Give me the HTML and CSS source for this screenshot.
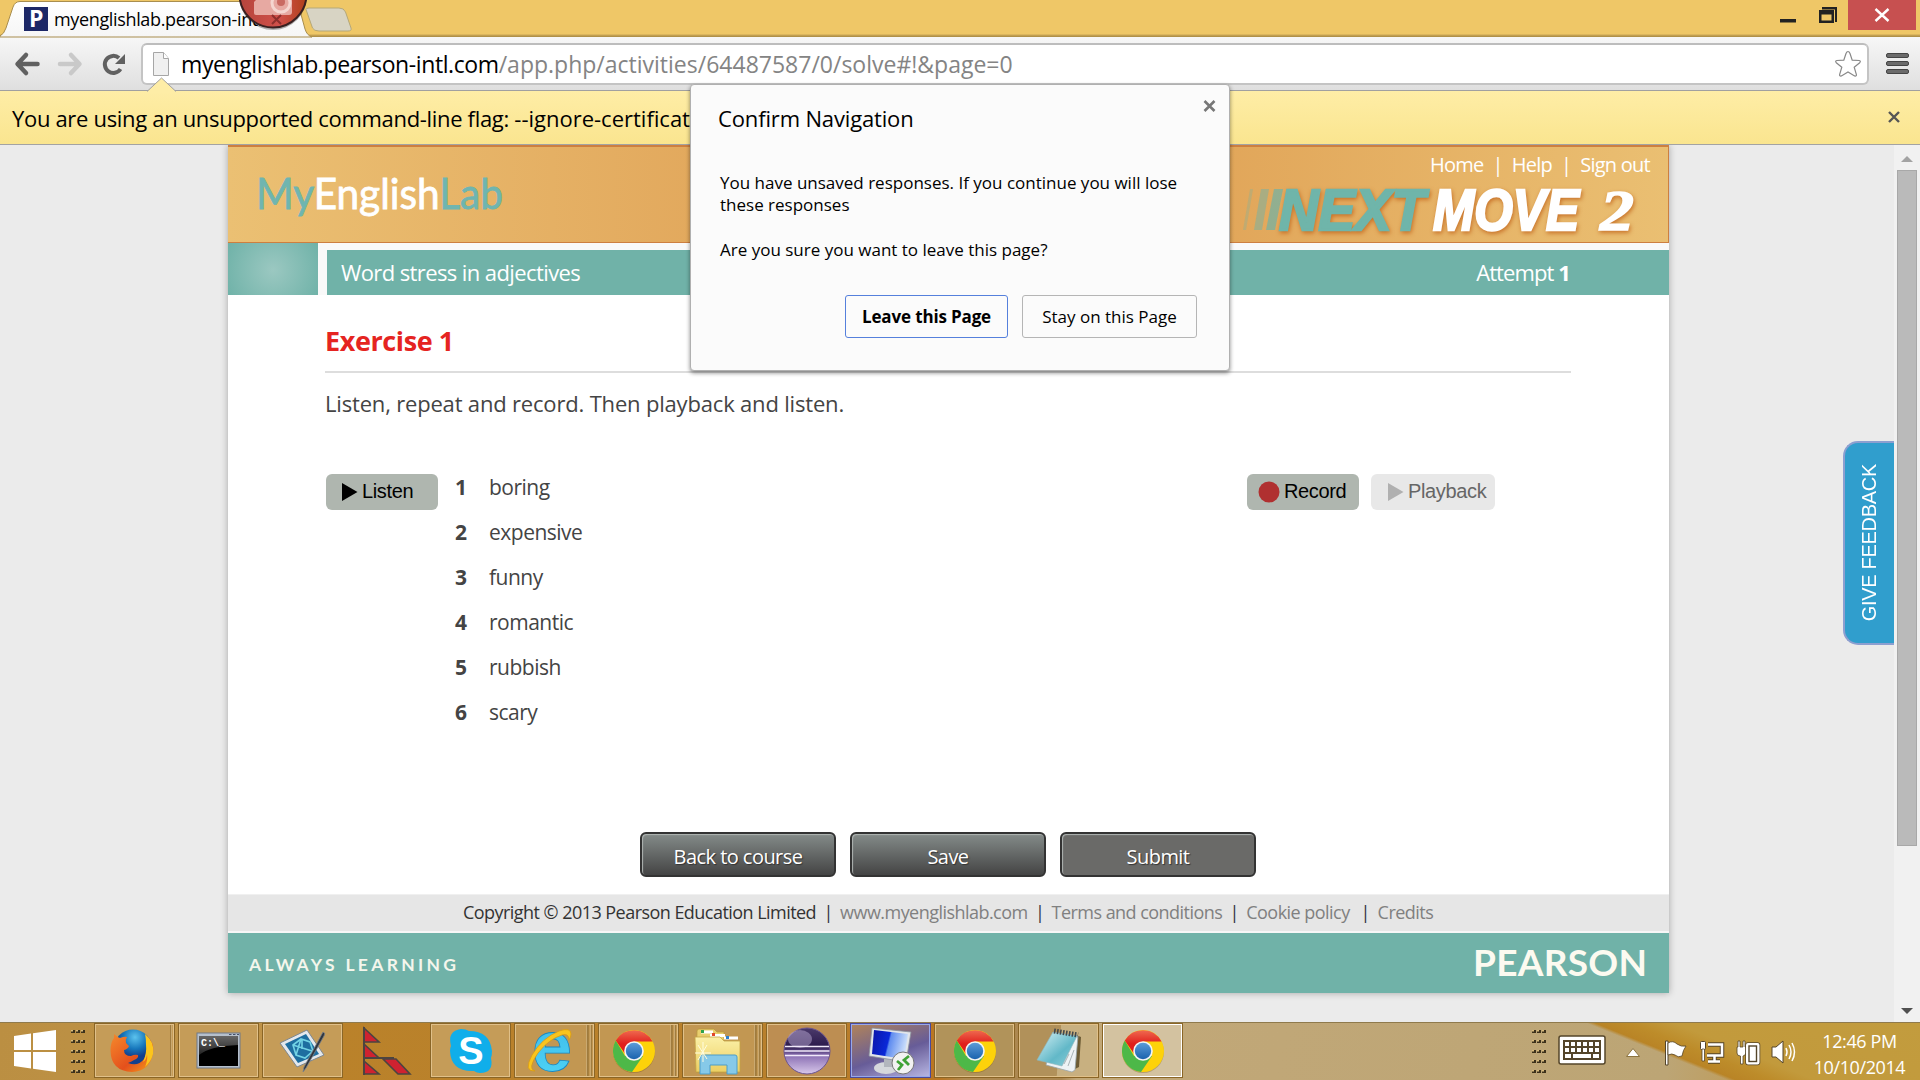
FILE: index.html
```html
<!DOCTYPE html>
<html lang="en">
<head>
<meta charset="utf-8">
<title>MyEnglishLab</title>
<link rel="stylesheet" href="styles.css">
</head>
<body>
<svg class="defs" width="0" height="0">
  <defs>
    <linearGradient id="g-red" x2="0" y2="1"><stop offset="0" stop-color="#ef6a50"/><stop offset=".6" stop-color="#e01f1c"/></linearGradient>
    <linearGradient id="g-blue" x2="0" y2="1"><stop offset="0" stop-color="#5b9bd8"/><stop offset="1" stop-color="#1a63ae"/></linearGradient>
    <linearGradient id="g-fox" x2="1" y2="1"><stop offset="0" stop-color="#f58a2c"/><stop offset=".6" stop-color="#e4501c"/><stop offset="1" stop-color="#f7a21b"/></linearGradient>
    <radialGradient id="g-globe" cx=".55" cy=".2"><stop offset="0" stop-color="#5cc3ee"/><stop offset=".6" stop-color="#1676bb"/><stop offset="1" stop-color="#14408c"/></radialGradient>
    <linearGradient id="g-ie" x2="0" y2="1"><stop offset="0" stop-color="#3cb6e6"/><stop offset="1" stop-color="#4fd6f8"/></linearGradient>
    <linearGradient id="g-folder" x2="0" y2="1"><stop offset="0" stop-color="#fbf0a8"/><stop offset="1" stop-color="#eccf62"/></linearGradient>
    <linearGradient id="g-ecl" x2="0" y2="1"><stop offset="0" stop-color="#4b3a6b"/><stop offset=".4" stop-color="#2b1a4c"/><stop offset=".6" stop-color="#8b70b4"/><stop offset="1" stop-color="#d8c8ea"/></linearGradient>
    <linearGradient id="g-screen" x2="1" y2=".2"><stop offset="0" stop-color="#0b14a8"/><stop offset=".5" stop-color="#0a28d8"/><stop offset=".55" stop-color="#5f8cf0"/><stop offset="1" stop-color="#c8dcfa"/></linearGradient>
    <linearGradient id="g-note" x2="1" y2="1"><stop offset="0" stop-color="#d8f2f6"/><stop offset=".6" stop-color="#62b8c8"/><stop offset="1" stop-color="#8fd0da"/></linearGradient>
    <linearGradient id="g-cmd" x2="0" y2="1"><stop offset="0" stop-color="#666"/><stop offset="1" stop-color="#222"/></linearGradient>
    <linearGradient id="g-rec" x2="1" y2="0"><stop offset="0" stop-color="#b5443c"/><stop offset=".6" stop-color="#d0504a"/><stop offset="1" stop-color="#b0401a"/></linearGradient>
    <linearGradient id="g-tab" x2="0" y2="1"><stop offset="0" stop-color="#fff"/><stop offset="1" stop-color="#f6f6f6"/></linearGradient>
    <symbol id="chrome" viewBox="0 0 44 44">
      <circle cx="22" cy="23" r="21" fill="#7a5a20" opacity=".35"/>
      <circle cx="22" cy="22" r="21" fill="#fdd20a"/>
      <path d="M3.8 11.5A21 21 0 0 0 20 42.900L31 27 13 27Z" fill="#4db848"/>
      <path d="M3.800 11.500A21 21 0 0 1 40.500 12.500L22 12.500 12.500 24Z" fill="url(#g-red)"/>
      <circle cx="22" cy="22" r="9.800" fill="#f4f4f4"/>
      <circle cx="22" cy="22" r="8.200" fill="url(#g-blue)"/>
    </symbol>
    <symbol id="grip" viewBox="0 0 14 45">
      <g fill="#3c311b"><path id="gr" d="M0 1h4v3H0zM5 1h4v3H5zM10 1h4v3h-4z"/><use href="#gr" y="10"/><use href="#gr" y="20"/><use href="#gr" y="30"/><use href="#gr" y="40"/></g>
      <g fill="#d9bb7c"><path id="gl" d="M0 1h2v1.500H0zM5 1h2v1.500H5zM10 1h2v1.500h-2z"/><use href="#gl" y="10"/><use href="#gl" y="20"/><use href="#gl" y="30"/><use href="#gl" y="40"/></g>
    </symbol>
  </defs>
</svg>

<div class="screen">
  <header class="titlebar">
    <svg class="tabs" width="360" height="37" viewBox="0 0 360 37">
      <path d="M306 9.500Q306 8 309 8H339Q344 8 345.500 12L351 28Q352 31 348 31H319Q314 31 312.500 28Z" fill="#d8d4c4" stroke="#b5a878"/>
      <path d="M0 37V36Q4 34 6 28L13 7Q15 1.500 20 1.500H292Q297 1.500 299 7L305 29Q307 35.500 312 37Z" fill="url(#g-tab)" stroke="#a88d4e"/>
      <rect x="24" y="7" width="24" height="24" fill="#1c2766"/>
      <text x="29" y="27" class="favicon">P</text>
    </svg>
    <span class="tab-title">myenglishlab.pearson-intl</span>
    <svg class="recorder" width="70" height="32" viewBox="0 0 70 32">
      <circle cx="35" cy="-4" r="34" fill="#000" opacity=".3"/>
      <circle cx="35" cy="-6" r="33.500" fill="url(#g-rec)" stroke="#3a2020" stroke-width="2"/>
      <path d="M18 0h36v12q0 3-3 3H18q-2 0-2-2V2z" fill="#e7a9a2"/>
      <circle cx="43" cy="3" r="9" fill="none" stroke="#f5d6d0" stroke-width="3"/><circle cx="43" cy="2" r="4" fill="#c96a62"/>
      <path d="M34 15l9 9M43 15l-9 9" stroke="#8c2f2c" stroke-width="2"/>
    </svg>
    <div class="winbtns">
      <svg width="62" height="30" viewBox="0 0 62 30"><path d="M0 19h16v3.500H0z" fill="#222"/><path d="M42 7h15v15h-2V9.500H42z" fill="#222"/><path d="M39 10h15v13H39zM41.500 14.500v6h10v-6z" fill="#222" fill-rule="evenodd"/></svg>
      <div class="winclose"><svg width="16" height="14" viewBox="0 0 16 14"><path d="M1.500 1l13 12M14.500 1l-13 12" stroke="#fff" stroke-width="2.400"/></svg></div>
    </div>
  </header>

  <div class="toolbar">
    <svg class="nav" width="126" height="54" viewBox="0 0 126 54">
      <path d="M26 18L17.500 27l8.500 9M18 27h19.500" fill="none" stroke="#616161" stroke-width="4.500" stroke-linecap="round" stroke-linejoin="round"/>
      <path d="M71 18l8.500 9-8.500 9M79 27H60" fill="none" stroke="#c9c9c9" stroke-width="4.500" stroke-linecap="round" stroke-linejoin="round"/>
      <path d="M120.500 32A8.500 8.500 0 1 1 119 21" fill="none" stroke="#616161" stroke-width="4"/><path d="M125 17v10h-10z" fill="#616161"/>
    </svg>
    <div class="omnibox">
      <svg width="16" height="24" viewBox="0 0 16 24"><path d="M.5.5h10l5 6v17H.5z" fill="#f0f0f0" stroke="#a6a6a6"/><path d="M10.500.5v6h5" fill="#fff" stroke="#a6a6a6"/></svg>
      <span class="url"><span class="host">myenglishlab.pearson-intl.com</span><span class="path">/app.php/activities/64487587/0/solve#!&amp;page=0</span></span>
      <svg class="star" width="28" height="28" viewBox="0 0 28 28"><path d="M14 1.500q1.200 0 2 2l2.200 6.700 7 .3q2 .4.500 2.200l-5.500 4.500 2.200 7.300q.2 2-1.800 1.400L14 22l-6.600 3.900q-2 .6-1.800-1.400l2.200-7.300L2.300 12.700q-1.500-1.800.5-2.200l7-.3L12 3.500q.8-2 2-2z" fill="#fff" stroke="#888" stroke-width="1.200"/></svg>
    </div>
    <svg class="menu" width="24" height="22" viewBox="0 0 24 22"><g fill="#6b6b6b" stroke="#454545"><rect x=".5" y=".5" width="22" height="4" rx="1.500"/><rect x=".5" y="8.500" width="22" height="4" rx="1.500"/><rect x=".5" y="16.500" width="22" height="4" rx="1.500"/></g></svg>
  </div>

  <div class="infobar">
    <svg class="notch" width="30" height="15" viewBox="0 0 30 15"><path d="M0 14.500L14.500 1 29 14.500" fill="#feeda6" stroke="#a0a0a0"/><path d="M1 15h27" stroke="#feeda6" stroke-width="2"/></svg>
    <span class="info-text"><span class="warn">You are using an unsupported command-line flag: </span>--ignore-certificat</span>
    <svg class="x" width="12" height="12" viewBox="0 0 12 12"><path d="M1 1l10 10M11 1L1 11" stroke="#555" stroke-width="2.400"/></svg>
  </div>

  <div class="viewport">
    <main class="page">
      <div class="banner">
        <svg width="260" height="90" viewBox="0 0 260 90" class="logo"><text x="-4" y="62" textLength="247" lengthAdjust="spacingAndGlyphs"><tspan class="teal">My</tspan><tspan class="white">English</tspan><tspan class="teal">Lab</tspan></text></svg>
        <div class="banner-right">
          <nav class="toplinks"><span>Home</span><i>|</i><span>Help</span><i>|</i><span>Sign out</span></nav>
          <svg class="nextmove" width="400" height="56" viewBox="0 0 400 56">
            <g fill="#6fb2a7"><path d="M1 8h3L-3 49H-6z" opacity=".3"/><path d="M12 8h8L13 49H5z" opacity=".5"/><path d="M25 8h9L26 49H17z" opacity=".7"/></g>
            <text x="30" y="49" class="nm next" textLength="146" lengthAdjust="spacingAndGlyphs">NEXT</text>
            <text x="184" y="49" class="nm move" textLength="146" lengthAdjust="spacingAndGlyphs">MOVE</text>
            <text x="351" y="49" class="nm two" textLength="34" lengthAdjust="spacingAndGlyphs">2</text>
          </svg>
        </div>
      </div>
      <div class="titlerow">
        <div class="glow"></div>
        <div class="unit"><span>Word stress in adjectives</span><span class="attempt">Attempt <b>1</b></span></div>
      </div>
      <section class="content">
        <h1>Exercise 1</h1>
        <p class="rubric">Listen, repeat and record. Then playback and listen.</p>
        <div class="task">
          <div class="abtn listen"><svg width="16" height="18" viewBox="0 0 16 18"><path d="M0 0l15.500 9L0 18z"/></svg><span>Listen</span></div>
          <ol class="words">
            <li><b>1</b><span>boring</span></li>
            <li><b>2</b><span>expensive</span></li>
            <li><b>3</b><span>funny</span></li>
            <li><b>4</b><span>romantic</span></li>
            <li><b>5</b><span>rubbish</span></li>
            <li><b>6</b><span>scary</span></li>
          </ol>
          <div class="abtn record"><svg width="22" height="22" viewBox="0 0 22 22"><circle cx="11" cy="11" r="10.500" fill="#b03030"/></svg><span>Record</span></div>
          <div class="abtn playback"><svg width="16" height="18" viewBox="0 0 16 18"><path d="M0 0l15.500 9L0 18z" fill="#b0b0b0"/></svg><span>Playback</span></div>
        </div>
        <div class="actions">
          <div class="btn">Back to course</div>
          <div class="btn">Save</div>
          <div class="btn flat">Submit</div>
        </div>
      </section>
      <div class="legal"><span class="dark">Copyright © 2013 Pearson Education Limited</span><i>|</i><span>www.myenglishlab.com</span><i>|</i><span>Terms and conditions</span><i>|</i><span>Cookie policy</span><i class="wide">|</i><span>Credits</span></div>
      <div class="brand">
        <svg width="220" height="60" viewBox="0 0 220 60"><text x="0" y="38" class="always" textLength="207" lengthAdjust="spacing">ALWAYS LEARNING</text></svg>
        <svg width="176" height="60" viewBox="0 0 176 60"><text x="0" y="43" class="pearson" textLength="174" lengthAdjust="spacing">PEARSON</text></svg>
      </div>
    </main>
    <div class="feedback"><span>GIVE FEEDBACK</span></div>
    <div class="scrollbar">
      <svg width="12" height="6" viewBox="0 0 12 6"><path d="M6 0l6 6H0z" fill="#a3a3a3"/></svg>
      <div class="thumb"></div>
      <svg width="12" height="6" viewBox="0 0 12 6"><path d="M0 0h12L6 6z" fill="#505050"/></svg>
    </div>
  </div>

  <footer class="taskbar">
    <svg class="start" width="44" height="44" viewBox="0 0 44 44"><path d="M1 7l17-2.500V21H1zM20 4.200L43 1v20H20zM1 23h17v16.500L1 37zM20 23h23v20l-23-3.200z" fill="#fff"/></svg>
    <svg class="grip1" width="14" height="45"><use href="#grip"/></svg>
    <div class="apps">
      <div class="app s1"><svg width="46" height="46" viewBox="0 0 46 46">
        <circle cx="24" cy="21" r="19.500" fill="url(#g-globe)"/>
        <path d="M37 7q9 8 7 18-3 18-21 19Q2 43 1.500 23 1.500 14 5 10V6q3 3 6 4 5-2 7-1-2 3-1 6l3 3q-1 3-5 4 0 6 7 6 4-2 7-1 1 3-4 5-3 2-6 3 10 4 16-4 5-9 2-18z" fill="url(#g-fox)"/>
        <path d="M36 6q10 8 8 20-2 8-8 13 3-7 2-13 0 5-4 8 4-9 3-17 0-7-1-11z" fill="#fcc51c"/></svg></div>
      <div class="app"><svg width="46" height="46" viewBox="0 0 46 46"><rect x="1" y="5" width="43" height="35" fill="#b6c0cc" stroke="#6f7988"/><path d="M33 6.500h2.500M37 6.500h2.500M41 6.500h2" stroke="#44506a"/><rect x="3" y="8" width="39" height="30" fill="#000"/><path d="M3 8h39v9Q14 18 3 27z" fill="url(#g-cmd)"/><text x="5" y="18" class="cmd">C:\_</text></svg></div>
      <div class="app"><svg width="46" height="46" viewBox="0 0 46 46"><path d="M0 15L27 2 44 27 17 39z" fill="#e4e8ec" stroke="#7d8790"/><path d="M5 16L26 6 39 26 18 35z" fill="#1e6ea0"/><path d="M13 17l8-6 9 3 3 9-8 7-9-3zM13 17l19 6M21 11l-5 16M22 11v10" fill="none" stroke="#72d2e4" stroke-width="1.600"/><path d="M43 4q3 1 1 4L26 40l-3 4 1-5z" fill="#30363e" stroke="#7b828c" stroke-width=".8"/></svg></div>
      <div class="app bare"><svg width="48" height="48" viewBox="0 0 48 48"><g fill="#cf2230" stroke="#4c4440" stroke-width="1.600"><path d="M1 1l15 14H1zM1 17l15 14H1zM1 34l15 13H1zM20 32h13l14 15H35z"/></g><path d="M1 0v48M1 31h30" stroke="#4c4440" stroke-width="2"/></svg></div>
      <div class="app"><svg width="46" height="46" viewBox="0 0 46 46"><path d="M13 1q5 0 8 2 21 0 23 20 0 4-1 7 3 15-11 15-3 0-6-2Q3 44 2 23q0-3 1-5Q-1 3 13 1z" fill="#10aeea"/><text x="23" y="36" class="skype">S</text></svg></div>
      <div class="app s2"><svg width="46" height="46" viewBox="0 0 46 46"><text x="25" y="43" class="ie">e</text><path d="M8 43Q-4 44 5 27 15 10 32 3q12-4 12 3 0 3-2 6 0-7-7-5Q22 11 11 25 0 41 8 43z" fill="#f9c41d" stroke="#d89a14" stroke-width=".8"/></svg></div>
      <div class="app s2"><svg width="44" height="44"><use href="#chrome"/></svg></div>
      <div class="app s2"><svg width="48" height="48" viewBox="0 0 48 48"><path d="M3 4q0-2 2-2h15l3 3h7v40H2z" fill="#e9cf6e" stroke="#b8973e" stroke-width=".8"/><path d="M7 3.500h12v3H7zM16 7h15v3H16zM30 9.500h14v3H30z" fill="#fff"/><path d="M1 10h25l4 4h16v31H2z" fill="url(#g-folder)" stroke="#c4a345" stroke-width=".8"/><path d="M7 3h3v3H7z" fill="#2fa34a"/><path d="M18 6h3v3h-3z" fill="#e2452a"/><path d="M32 9h3v3h-3z" fill="#2c7fd0"/><path d="M6 30q0-2 2-2h33q2 0 2 2v17H33V38H16v9H6z" fill="#86c9e8" stroke="#4d9dc8"/><path d="M1 26l16 0M4 18l9 14M13 18L4 33M9 15v20" stroke="#fffde0" stroke-width="1"/></svg></div>
      <div class="app warm"><svg width="48" height="48" viewBox="0 0 48 48"><circle cx="24" cy="24" r="23" fill="url(#g-ecl)" stroke="#6a5492"/><ellipse cx="17" cy="12" rx="12" ry="9" fill="#c8b8e0" opacity=".45"/><path d="M2 19.500h44M1.500 24h45M2 28.500h44" stroke="#f1e9fa" stroke-width="1.700"/></svg></div>
      <div class="app rdp"><svg width="48" height="48" viewBox="0 0 48 48"><ellipse cx="19" cy="41" rx="12" ry="6" fill="#d5d8dc"/><path d="M17 30h9l-1 10h-8z" fill="#b2b6bd"/><path d="M5 1l39 4-5 30L2 29z" fill="#e2e5ea" stroke="#8a909c" stroke-width=".8"/><path d="M7 3l34 4-4 25L5 27z" fill="url(#g-screen)"/><circle cx="36" cy="36" r="11" fill="#f2f2f2" stroke="#777"/><path d="M30 34l5 4-4 5M42 29l-5 4 5 5" fill="none" stroke="#3fa236" stroke-width="2.800"/></svg></div>
      <div class="app"><svg width="44" height="44"><use href="#chrome"/></svg></div>
      <div class="app"><svg width="46" height="46" viewBox="0 0 46 46"><path d="M40 7l5 2-2 30-8 4z" fill="#6d5c34"/><path d="M17 6l25 2-3 34-3 2L10 37z" fill="#eef3f5" stroke="#98a4a8" stroke-width=".8"/><path d="M17 4l24 4-15 30L1 32z" fill="url(#g-note)" stroke="#8fb6bc" stroke-width=".6"/><path d="M28 36l5-10M32 38l6-16" stroke="#a9b4b8"/><path d="M18 3l24 4" stroke="#43484a" stroke-width="5" stroke-dasharray="1.600 1.400"/></svg></div>
      <div class="app active"><svg width="44" height="44"><use href="#chrome"/></svg></div>
    </div>
    <div class="tray">
      <svg width="14" height="45"><use href="#grip"/></svg>
      <svg class="kb" width="48" height="30" viewBox="0 0 48 30"><rect x="1" y="1" width="46" height="28" rx="2" fill="#fff" stroke="#54452a" stroke-width="1.500"/><rect x="5" y="5" width="38" height="20" fill="#54452a"/><path d="M7 9h34M7 15h34" stroke="#fff" stroke-width="4" stroke-dasharray="4 2"/><path d="M7 21h6M15 21h18M35 21h6" stroke="#fff" stroke-width="4"/></svg>
      <svg class="caret" width="14" height="9" viewBox="0 0 14 9"><path d="M7 .5L13.500 8.500H.5z" fill="#fff" stroke="#8c7440"/></svg>
      <svg class="ti" width="24" height="26" viewBox="0 0 24 26"><path d="M1.500 1h2.500v24H1.500z" fill="#fff" stroke="#54452a"/><path d="M4 3q5-3 9 1 4 3 9 2-3 4-4 10-4 2-7-1-3-2-7 0z" fill="#fff" stroke="#54452a" stroke-width=".8"/></svg>
      <svg class="ti" width="25" height="24" viewBox="0 0 25 24"><path d="M9 4.500h14v11H8M15.500 16v5M9 21.500h12" fill="none" stroke="#54452a" stroke-width="4.500"/><path d="M9 4.500h14v11H8M15.500 16v5M9 21.500h12" fill="none" stroke="#fff" stroke-width="2.500"/><rect x="1.500" y="1.500" width="5" height="8" rx="1" fill="#fff" stroke="#54452a"/><path d="M3 9h2.500v12H3z" fill="#fff" stroke="#54452a" stroke-width=".8"/></svg>
      <svg class="ti" width="25" height="25" viewBox="0 0 25 25"><path d="M3 1h2v6h3V1h2v6h1v6q-1 3-3 3v8H5.500v-8Q2 16 2 13V7h1z" fill="#fff" stroke="#54452a" stroke-width=".8"/><rect x="12" y="4" width="11.500" height="19.500" rx="1" fill="#c29f45" stroke="#54452a" stroke-width="3.500"/><rect x="12" y="4" width="11.500" height="19.500" rx="1" fill="#fff" stroke="#fff" stroke-width="2"/><rect x="14" y="6" width="7.500" height="15.500" fill="#fff" stroke="#54452a" stroke-width="1.400"/></svg>
      <svg class="ti" width="24" height="24" viewBox="0 0 24 24"><path d="M1 7h4l7-6v22l-7-6H1z" fill="#fff" stroke="#54452a"/><path d="M15 8q2 4 0 8M18 5q4 7 0 14M21 3q5 9 0 18" fill="none" stroke="#fff" stroke-width="1.500"/></svg>
      <div class="clock"><span>12:46 PM</span><span>10/10/2014</span></div>
    </div>
  </footer>

  <div class="dialog">
    <svg class="x" width="13" height="12" viewBox="0 0 13 12"><path d="M1.500 1l10 10M11.500 1l-10 10" stroke="#777" stroke-width="2.600"/></svg>
    <h2>Confirm Navigation</h2>
    <p>You have unsaved responses. If you continue you will lose<br>these responses</p>
    <p>Are you sure you want to leave this page?</p>
    <div class="dlg-btns"><div class="dbtn primary">Leave this Page</div><div class="dbtn">Stay on this Page</div></div>
  </div>
</div>
</body>
</html>
```
FILE: styles.css
```css
* { box-sizing: border-box; }
body { margin: 0; overflow: hidden; font-family: "Open Sans", "Noto Sans", sans-serif; }
svg { display: block; flex: none; overflow: visible; }
i { font-style: normal; }
.defs { position: absolute; }
.screen { position: relative; width: 1920px; height: 1080px; display: flex; flex-direction: column; overflow: hidden; background: #ebebeb; }

/* browser window */
.titlebar { position: relative; height: 37px; background: linear-gradient(#efc767 34px, #c9a655 35px, #a88a45 37px); display: flex; justify-content: space-between; }
.favicon { font: bold 23px "Open Sans", sans-serif; fill: #fff; }
.tab-title { position: absolute; left: 54px; top: 7px; font-size: 18px; line-height: 24px; letter-spacing: -.35px; white-space: nowrap; }
.recorder { position: absolute; left: 238px; top: 0; }
.winbtns { display: flex; gap: 6px; padding-right: 4px; }
.winclose { width: 68px; height: 30px; background: #c75050; display: flex; align-items: center; justify-content: center; }
.toolbar { height: 54px; background: linear-gradient(#f7f7f7, #dfdfdf); border-bottom: 1px solid #a0a0a0; display: flex; }
.omnibox { margin: 6px 0 0 15px; width: 1728px; height: 42px; border: 2px solid #c4c4c4; border-top-color: #bdbdbd; border-radius: 6px; background: #fff; display: flex; align-items: center; padding: 0 5px 0 10px; }
.url { flex: 1; padding-left: 12px; font-size: 23px; line-height: 32px; white-space: nowrap; color: #848484; }
.host { color: #000; letter-spacing: -.4px; }
.menu { margin: 16px 0 0 17px; }
.infobar { position: relative; height: 54px; background: linear-gradient(#feeda6, #fae58f); border-bottom: 1px solid #a3a3a3; display: flex; align-items: center; justify-content: space-between; padding: 0 20px 0 12px; font-size: 22px; }
.notch { position: absolute; left: 147px; top: -14px; }
.info-text { white-space: nowrap; padding-top: 1px; }
.warn { letter-spacing: -.32px; }

/* page */
.viewport { position: relative; height: 879px; display: flex; justify-content: space-between; padding-left: 228px; }
.page { width: 1441px; height: 848px; background: #fff; box-shadow: 0 0 7px rgba(0,0,0,.3); clip-path: inset(0 -10px -10px -10px); display: flex; flex-direction: column; color: #444; }
.banner { height: 98px; background: linear-gradient(90deg, #ebc073, #dfa055 45%, #df9f53 60%, #eabf72); border: 1px solid #cd7f40; border-left: 0; border-top-width: 2px; display: flex; justify-content: space-between; padding-left: 32px; }
.logo { font: 43px Lato, sans-serif; stroke-width: .8; }
.teal { fill: #6fb5b0; stroke: #6fb5b0; }
.white { fill: #fff; stroke: #fff; }
.banner-right { display: flex; flex-direction: column; align-items: flex-end; }
.toplinks { display: flex; gap: 9px; color: #fff; font-size: 20px; line-height: 28px; margin: 4px 18px 0 0; letter-spacing: -.75px; }
.nextmove { margin: 2px 19px 0 0; }
.nm { font: italic bold 57px "Liberation Sans", sans-serif; filter: drop-shadow(1px 2px 2px #c87228); }
.next { fill: #6fb5aa; stroke: #6fb5aa; stroke-width: 2.500; }
.move { fill: #fff; stroke: #fff; stroke-width: 2.500; }
.two { fill: #fff; stroke: #fff; stroke-width: 1.500; font: italic bold 57px "Liberation Serif", serif; }
.titlerow { display: flex; gap: 9px; height: 52px; background: #f9f9f9; }
.glow { width: 90px; background: radial-gradient(circle at 50% 52%, #9bc8c1, #6fb2a8 52px); }
.unit { flex: 1; margin-top: 7px; background: #70b2a8; color: #fff; font-size: 22px; line-height: 44px; letter-spacing: -.6px; display: flex; justify-content: space-between; padding: 0 99px 0 14px; }
.attempt { letter-spacing: -.9px; }
.content { flex: 1; padding: 0 98px 0 97px; }
h1 { margin: 0; padding-top: 25px; height: 78px; border-bottom: 2px solid #ddd; color: #e52421; font-size: 27px; line-height: 42px; letter-spacing: -.4px; }
.rubric { margin: 14px 0 0; font-size: 22px; line-height: 32px; height: 32px; letter-spacing: -.18px; }
.task { display: flex; margin-top: 55px; height: 270px; }
.abtn { display: flex; align-items: center; height: 36px; border-radius: 6px; background: #afb6af; color: #000; font: 20px "Liberation Sans", sans-serif; letter-spacing: -.35px; }
.listen { width: 112px; margin-left: 1px; padding-left: 16px; gap: 4px; }
.words { list-style: none; margin: -9px 0 0 17px; padding: 0; width: 792px; font-size: 21px; line-height: 45px; letter-spacing: -.5px; }
.words li { display: flex; gap: 21px; }
.words b { width: 13px; }
.record { width: 112px; padding-left: 11px; gap: 4px; }
.playback { width: 124px; margin-left: 12px; padding-left: 17px; gap: 4px; background: #e8e8e8; color: #666; }
.actions { display: flex; gap: 14px; margin: 88px 0 0 315px; }
.btn { width: 196px; height: 45px; border: 2px solid #333; border-radius: 6px; background: linear-gradient(#848b89, #444); box-shadow: inset 1px 1px 1px #b0b5b3; color: #fff; font-size: 20px; line-height: 45px; letter-spacing: -.55px; text-align: center; text-shadow: 1px 1px 1px #333; }
.flat { background: #6a6a68; }
.legal { height: 39px; background: #e6e6e6; border-top: 1px solid #f0f0f0; border-bottom: 2px solid #f6f6f6; display: flex; padding-left: 235px; font-size: 18px; line-height: 34px; letter-spacing: -.54px; color: #808080; white-space: nowrap; }
.legal i { width: 24px; text-align: center; color: #334; }
.legal .wide { width: 28px; padding-left: 3px; }
.dark { color: #333; }
.brand { height: 60px; background: #70b2a8; display: flex; justify-content: space-between; padding: 0 20px 0 21px; }
.always { font: bold 17.500px Lato, sans-serif; fill: #f4f6ec; }
.pearson { font: bold 37px Lato, sans-serif; fill: #fcfaf0; }
.feedback { position: absolute; left: 1843px; top: 296px; width: 51px; height: 204px; border: 2px solid #8c9fd0; border-right: 0; border-radius: 15px 0 0 15px; background: #309ecd; color: #fff; font: 20px "Liberation Sans", sans-serif; display: flex; align-items: center; justify-content: center; writing-mode: vertical-rl; letter-spacing: -.3px; }
.feedback span { transform: rotate(180deg); }
.scrollbar { width: 26px; background: #f1f1f1; display: flex; flex-direction: column; align-items: center; padding: 11px 0 8px; }
.thumb { width: 20px; height: 676px; margin: 8px 0 auto; background: #bababa; border: 1px solid #a8a8a8; }

/* system taskbar */
.taskbar { flex: 1; border-top: 1px solid #8f7a4c; display: flex; background: linear-gradient(100deg, #bb8f42 0, #bf9348 280px, #ba822a 300px, #b9802c 800px, #b97522 935px, #b08a50 960px, #a98650 1055px, #c2a878 1070px, #bca575 1650px, #bf9a54 1750px); }
.start { margin: 6px 0 0 13px; }
.grip1 { margin: 6px 9px 0 14px; }
.apps { display: flex; gap: 3px; }
.app { width: 81px; height: 55px; border: 1px solid #8a6526; box-shadow: inset 0 0 0 1px #e0c089; background: #c59c58; display: flex; align-items: center; justify-content: center; }
.s1 { background: linear-gradient(90deg, transparent 75px, #8a6526 75px, #e0c089 77px, transparent 77px), #c59c58; padding-right: 5px; }
.s2 { background: linear-gradient(90deg, transparent 71px, #e0c089 71px, #8a6526 73px, #c59c58 74px, transparent 75px, #e0c089 75px, #8a6526 77px, transparent 77px), #c29752; padding-right: 9px; }
.bare { background: none; border: 0; box-shadow: none; }
.warm { background: #bd8e52; }
.rdp { border-color: #4a4a9c; box-shadow: inset 0 0 0 1px #98a8ea; background: linear-gradient(160deg, #b28458, #675c98 55%, #b9b8e4); }
.app:nth-child(n+11) { background: #b1935a; }
.app:nth-child(12) { background: linear-gradient(95deg, #b1915a 50%, #c8b080 51%); }
.app.active { background: #d3c2a0; box-shadow: inset 0 0 0 1px #fff; }
.cmd { font: bold 10px "Liberation Mono", monospace; fill: #fff; }
.skype { font: bold 38px "Liberation Sans", sans-serif; fill: #fff; text-anchor: middle; }
.ie { font: bold 72px "Liberation Sans", sans-serif; fill: url(#g-ie); stroke: #1c86c0; stroke-width: .8; text-anchor: middle; }
.tray { flex: 1; display: flex; justify-content: flex-end; padding: 6px 14px 0 0; color: #fff; background: linear-gradient(22deg, transparent 62%, #b98426 63%, #bd8c2a 67%, #c29a3c 72%, #c29c3e); }
.kb { margin: 6px 20px 0 12px; }
.caret { margin: 19px 24px 0 0; }
.ti { margin: 11px 11px 0 0; }
.clock { width: 93px; display: flex; flex-direction: column; align-items: center; margin: -1px 0 0 7px; font-size: 18px; line-height: 26px; letter-spacing: -.4px; }

/* confirmation dialog */
.dialog { position: absolute; left: 690px; top: 84px; width: 540px; height: 287px; background: #fbfbfb; border: 1px solid #b0b0b0; border-radius: 4px; box-shadow: 0 2px 4px rgba(0,0,0,.45); padding: 16px 32px 0 29px; color: #000; font-size: 17px; line-height: 22px; }
.dialog .x { position: absolute; right: 13px; top: 15px; }
.dialog h2 { margin: 0 0 37px -2px; font-weight: 400; font-size: 22px; line-height: 34px; letter-spacing: -.15px; }
.dialog p { margin: 0 0 23px; white-space: nowrap; }
.dlg-btns { display: flex; justify-content: flex-end; gap: 14px; margin-top: 34px; }
.dbtn { width: 175px; height: 43px; border: 1px solid #b5b5b5; border-radius: 3px; line-height: 41px; text-align: center; }
.primary { width: 163px; border-color: #5580dc; font-weight: 700; letter-spacing: -.15px; }
```
